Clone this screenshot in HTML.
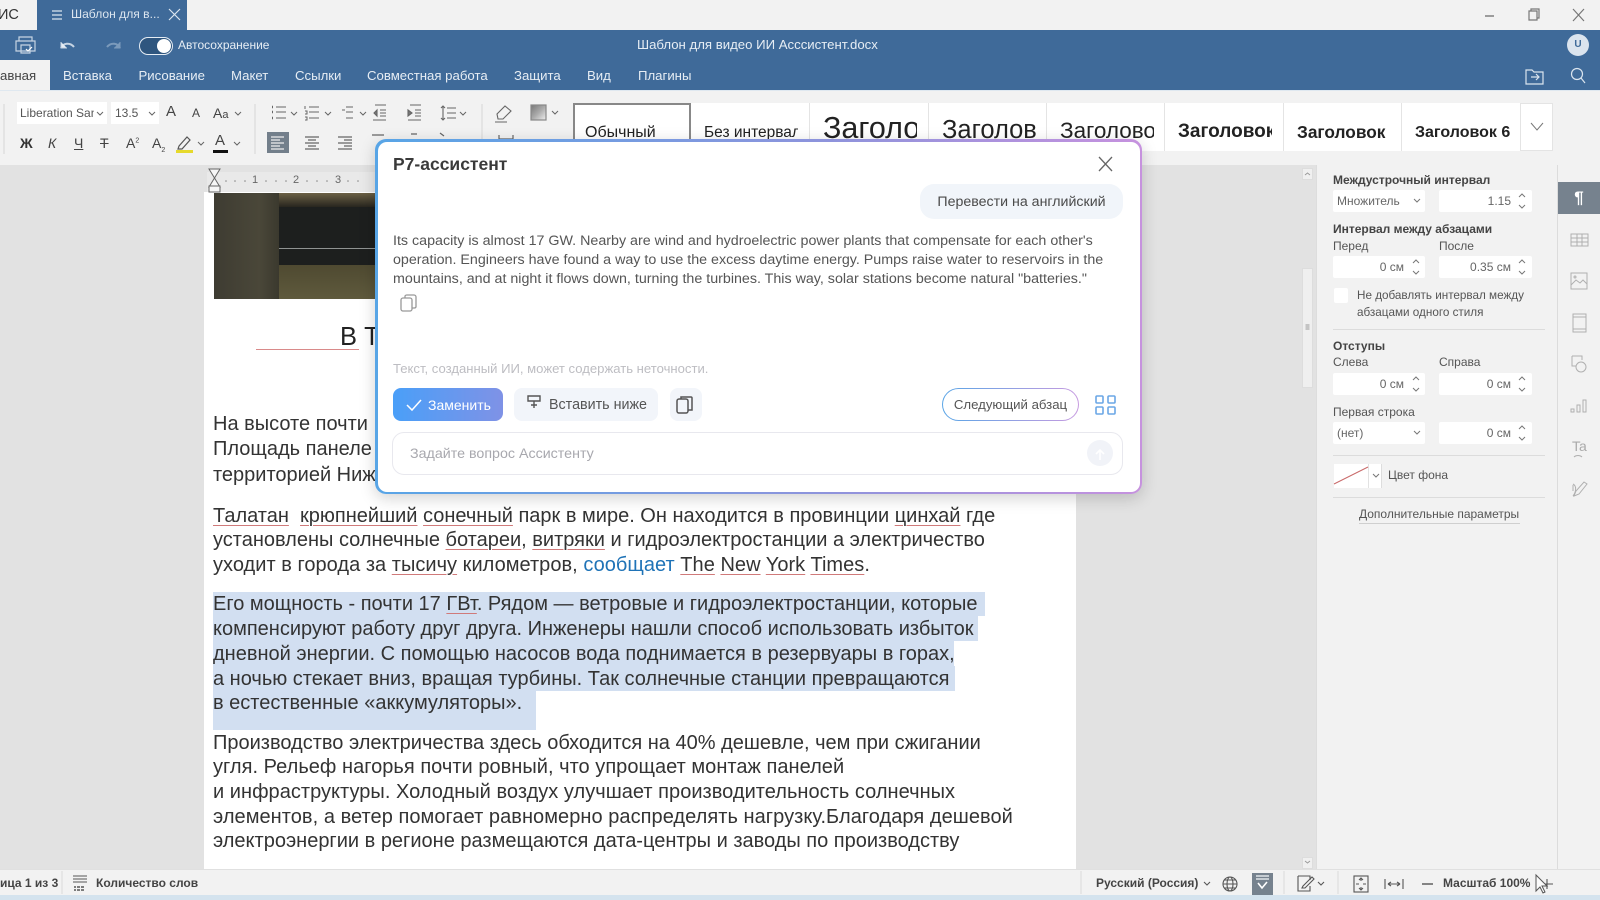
<!DOCTYPE html>
<html lang="ru"><head><meta charset="utf-8"><title>Р7</title>
<style>
*{box-sizing:border-box}
html,body{margin:0;padding:0;width:1600px;height:900px;overflow:hidden;background:#e2e2e2;font-family:"Liberation Sans",sans-serif;color:#444}
body{filter:blur(.3px)}
.a{position:absolute}
.t{position:absolute;white-space:nowrap;line-height:20px;height:20px}
.w{color:#e6edf4;font-size:13.2px}
.d{color:#333;font-size:20px;left:213px;line-height:24px;height:24px}
.u{text-decoration:underline;text-decoration-color:#d07a7a;text-decoration-thickness:1px;text-underline-offset:3px}
.l{font-size:12px;color:#555}
.b{font-size:12px;font-weight:bold;color:#444}
.f{position:absolute;background:#fff;border-radius:2px;height:22px;font-size:12px;color:#666;line-height:22px;padding-right:21px;text-align:right}
.f.c{padding:0 0 0 4px;text-align:left}
.hr{position:absolute;left:1333px;width:212px;height:1px;background:#dcdcdc}
.cell{position:absolute;top:103px;height:48px;background:#fff;overflow:hidden;border-right:1px solid #e4e4e4}
.cell span{position:absolute;white-space:nowrap;color:#222;line-height:40px;width:94px;overflow:hidden;left:13px}
.m{font-size:14.27px;color:#555;left:393px}
</style></head><body>

<!-- title bar -->
<div class="a" style="left:0;top:0;width:1600px;height:30px;background:#f2f2f2"></div>
<div class="t" style="left:-2px;top:5px;font-size:14.5px;color:#333">ИС</div>
<div class="a" style="left:37px;top:0;width:150px;height:30px;background:#3f6a99"></div>
<div class="t w" style="left:71px;top:4px;font-size:12.1px;color:#dbe5ef">Шаблон для в...</div>

<!-- header -->
<div class="a" style="left:0;top:30px;width:1600px;height:60px;background:#3f6a99"></div>
<div class="a" style="left:0;top:60px;width:50px;height:30px;background:#f2f2f2"></div>
<div class="t" style="left:0;top:66px;font-size:13.2px;color:#444">авная</div>
<div class="t w" style="left:63px;top:66px">Вставка</div>
<div class="t w" style="left:138.5px;top:66px">Рисование</div>
<div class="t w" style="left:231px;top:66px">Макет</div>
<div class="t w" style="left:295px;top:66px">Ссылки</div>
<div class="t w" style="left:367px;top:66px">Совместная работа</div>
<div class="t w" style="left:514px;top:66px">Защита</div>
<div class="t w" style="left:587px;top:66px">Вид</div>
<div class="t w" style="left:638px;top:66px">Плагины</div>
<div class="t w" style="left:178px;top:35px;font-size:12px">Автосохранение</div>
<div class="t w" style="left:637px;top:35px;font-size:13.2px">Шаблон для видео ИИ Асссистент.docx</div>
<div class="a" style="left:139px;top:37px;width:34px;height:18px;border:1.5px solid #e6edf4;border-radius:9px;background:#2f567f"></div>
<div class="a" style="left:157px;top:39px;width:14px;height:14px;border-radius:50%;background:#fff"></div>
<div class="a" style="left:1567px;top:34px;width:22px;height:22px;border-radius:50%;background:#dbe4ee;color:#3f6a99;font-size:10px;font-weight:bold;text-align:center;line-height:22px">U</div>

<!-- toolbar -->
<div class="a" style="left:0;top:90px;width:1600px;height:75px;background:#f2f2f2;border-top:1px solid #dfe8f0"></div>
<div class="a" style="left:17px;top:102px;width:90px;height:22px;background:#fff"></div>
<div class="a" style="left:111px;top:102px;width:48px;height:22px;background:#fff"></div>
<div class="t" style="left:20px;top:103px;font-size:12px;width:74px;overflow:hidden;color:#555">Liberation Sans</div>
<div class="t" style="left:115px;top:103px;font-size:12px;color:#555">13.5</div>
<div class="t" style="left:166px;top:102px;font-size:15px">A</div>
<div class="t" style="left:192px;top:103px;font-size:12px">A</div>
<div class="t" style="left:213px;top:103px;font-size:14px">A<span style="font-size:11px">a</span></div>
<div class="t" style="left:20px;top:133px;font-size:14px;font-weight:bold;color:#333">Ж</div>
<div class="t" style="left:48px;top:133px;font-size:14px;font-style:italic">К</div>
<div class="t" style="left:74px;top:133px;font-size:14px;text-decoration:underline">Ч</div>
<div class="t" style="left:100px;top:133px;font-size:14px;text-decoration:line-through">Т</div>
<div class="t" style="left:126px;top:133px;font-size:14px">A<sup style="font-size:7px;line-height:0">2</sup></div>
<div class="t" style="left:152px;top:133px;font-size:14px">A<sub style="font-size:7px;line-height:0">2</sub></div>
<div class="t" style="left:215px;top:131px;font-size:15px">A</div>
<div class="a" style="left:213px;top:150px;width:15px;height:3px;background:#111"></div>
<div class="a" style="left:176px;top:150px;width:17px;height:3px;background:#e6d92c"></div>
<div class="a" style="left:267px;top:132px;width:22px;height:21px;background:#737f8b"></div>

<svg class="a" style="left:0;top:0" width="1600" height="900" fill="none" stroke="#555" stroke-width="1.2">
 <!-- title bar icons -->
 <path d="M169 9l11 11M180 9l-11 11" stroke="#dbe5ef"/>
 <path d="M52 11h10M52 15h10M52 19h10" stroke="#dbe5ef"/>
 <path d="M1485 16h9" stroke="#777" stroke-width="1.4"/>
 <path d="M1529 11h8v9h-8zM1531 11V9h8v9h-2" stroke="#777"/>
 <path d="M1573 9l11 12M1584 9l-11 12" stroke="#777"/>
 <!-- header icons -->
 <g stroke="#c6d4e3" stroke-width="1.2">
  <path d="M19 41v-4h13v4M16 41h19v10h-19zM21 45h9v8h-9z"/>
  <path d="M26 49l2 2 4-4" stroke="#fff"/>
  <path d="M61 48c2-5 9-6 13-1" stroke-width="2"/><path d="M61 42v6h6" fill="#e6edf4" stroke-width="1"/>
 </g>
 <path d="M120 48c-2-5-9-6-13-1" stroke="#7b9abb" stroke-width="2"/><path d="M120 42v6h-6" stroke="#7b9abb" fill="#7b9abb" stroke-width="1"/>
 <g stroke="#dbe5ef">
  <path d="M1526 70h6l2 2h9v12h-17zM1531 77h8M1536 74l3 3-3 3"/>
  <circle cx="1577" cy="74" r="5.5"/><path d="M1581 78l4 5"/>
 </g>
 <!-- font combos & chevrons -->
 <g stroke="#666" stroke-width="1">
  <path d="M97 112l3 3 3-3M149 112l3 3 3-3M235 112l3 3 3-3M291 112l3 3 3-3M325 112l3 3 3-3M360 112l3 3 3-3M460 112l3 3 3-3M552 111l3 3 3-3M198 142l3 3 3-3M234 142l3 3 3-3"/>
 </g>
 <!-- separators -->
 <path d="M4 104v50M255 104v50M482 104v50" stroke="#dcdcdc"/>
 <!-- lists -->
 <g stroke="#666" stroke-width="1.1">
  <path d="M276 107h10M276 112h10M276 118h10M309 107h10M309 112h10M309 118h10M346 107h7M346 112h7M346 118h7M342 110h3" />
  <path d="M272 107h1M272 112h1M272 118h1" stroke-width="2.5"/>
  <path d="M305 106v3M305 111h2v3h-2M305 117h2v3h-2" stroke-width="1"/>
  <path d="M375 105h11M380 110h6M380 113h6M380 116h6M373 120h13M377 110l-3 3 3 3z" fill="#777"/>
  <path d="M410 105h11M415 110h6M415 113h6M415 116h6M408 120h13M408 110l4 3-4 3z" fill="#777"/>
  <path d="M447 108h9M447 113h9M447 118h9M443 106v14M441 108l2-2 2 2M441 118l2 2 2-2"/>
  <path d="M497 114l8-8 6 5-8 8h-5zM495 122h12"/>
 </g>
 <defs><linearGradient id="sh" x1="0" y1="0" x2="1" y2="1"><stop offset="0" stop-color="#777"/><stop offset=".5" stop-color="#aaa"/><stop offset="1" stop-color="#eee"/></linearGradient></defs>
 <rect x="531" y="105" width="15" height="15" fill="url(#sh)" stroke="#888"/>
 <!-- row 2 -->
 <path d="M179 146l8-9 3 3-8 9h-4z" stroke="#555"/>
 <path d="M271 137h13M271 140h9M271 143h13M271 146h9M271 149h13" stroke="#eee"/>
 <path d="M305 137h14M308 140h8M305 143h14M308 146h8M305 149h14M338 137h14M344 140h8M338 143h14M344 146h8M338 149h14" stroke="#666"/>
 <path d="M372 135h12M411 134h6M440 133l4 3M499 135v4h14v-4" stroke="#666"/>
</svg>

<!-- styles gallery -->
<div class="a" style="left:573px;top:103px;width:980px;height:48px;background:#fff;border:1px solid #e4e4e4"></div>
<div class="cell" style="left:573px;width:118px;border:2px solid #888;border-bottom:0;top:103px"><span style="left:10px;font-size:16px;top:8px;width:100px">Обычный</span></div>
<div class="cell" style="left:691px;width:119px"><span style="font-size:15.5px;top:10px">Без интервала</span></div>
<div class="cell" style="left:810px;width:119px"><span style="font-size:30.5px;top:5px">Заголовок</span></div>
<div class="cell" style="left:929px;width:118px"><span style="font-size:25.5px;top:7px">Заголовок</span></div>
<div class="cell" style="left:1047px;width:118px"><span style="font-size:22.5px;top:8px">Заголовок</span></div>
<div class="cell" style="left:1165px;width:119px"><span style="font-size:19px;top:9px;font-weight:bold">Заголовок</span></div>
<div class="cell" style="left:1284px;width:118px"><span style="font-size:17.3px;top:9px;font-weight:bold">Заголовок</span></div>
<div class="cell" style="left:1402px;width:119px"><span style="font-size:16px;top:10px;font-weight:bold;width:100px">Заголовок 6</span></div>
<svg class="a" style="left:1521px;top:103px" width="32" height="48" fill="none" stroke="#777"><path d="M10 20l6 7 6-7"/></svg>

<!-- canvas -->
<div class="a" style="left:0;top:165px;width:1316px;height:705px;background:#e2e2e2"></div>
<div class="a" style="left:204px;top:192px;width:872px;height:678px;background:#fff"></div>
<!-- ruler -->
<div class="a" style="left:207px;top:172px;width:175px;height:20px;background:#e9e9e9"></div>
<div class="t" style="left:252px;top:170px;font-size:11px;color:#666">1</div>
<div class="t" style="left:293px;top:170px;font-size:11px;color:#666">2</div>
<div class="t" style="left:335px;top:170px;font-size:11px;color:#666">3</div>
<svg class="a" style="left:214px;top:171px" width="170" height="20" fill="#888" stroke="none">
 <circle cx="12" cy="10" r=".8"/><circle cx="21" cy="10" r=".8"/><circle cx="31" cy="10" r=".8"/><circle cx="52" cy="10" r=".8"/><circle cx="62" cy="10" r=".8"/><circle cx="72" cy="10" r=".8"/><circle cx="93" cy="10" r=".8"/><circle cx="103" cy="10" r=".8"/><circle cx="113" cy="10" r=".8"/><circle cx="134" cy="10" r=".8"/><circle cx="144" cy="10" r=".8"/>
</svg>
<svg class="a" style="left:205px;top:168px" width="20" height="26" fill="#f6f6f6" stroke="#666" stroke-width="1">
 <path d="M4 1h11l-5.500 9 5.500 9h-11l5.500-9z"/><rect x="4" y="18" width="11" height="6"/>
</svg>

<!-- doc image -->
<div class="a" style="left:214px;top:193px;width:170px;height:106px;overflow:hidden;background:#1d1f1e">
 <div class="a" style="left:0;top:0;width:65px;height:106px;background:linear-gradient(90deg,#3e3c32,#4a4739 70%,#3b392e)"></div>
 <div class="a" style="left:65px;top:0;width:105px;height:14px;background:linear-gradient(#6b6045,#28261f)"></div>
 <div class="a" style="left:65px;top:72px;width:105px;height:34px;background:linear-gradient(#4f4a31,#5f5a3d)"></div>
 <div class="a" style="left:65px;top:55px;width:105px;height:1px;background:#8f9392"></div>
</div>
<div class="t" style="left:340px;top:323px;font-size:25.5px;color:#222;line-height:28px;height:28px">В Т</div>
<div class="a" style="left:256px;top:349px;width:103px;height:1px;background:#d98a8a"></div>

<!-- doc text -->
<div class="t d" style="top:412px">На высоте почти</div>
<div class="t d" style="top:437px">Площадь панеле</div>
<div class="t d" style="top:463px">территорией Ниж</div>

<div class="t d" style="top:503.500px"><span class="u">Талатан</span>&nbsp; <span class="u">крюпнейший</span> <span class="u">сонечный</span> парк в мире. Он находится в провинции <span class="u">цинхай</span> где</div>
<div class="t d" style="top:528px">установлены солнечные <span class="u">ботареи</span>, <span class="u">витряки</span> и гидроэлектростанции а электричество</div>
<div class="t d" style="top:552.500px;letter-spacing:.03px">уходит в города за <span class="u">тысичу</span> километров, <span style="color:#1f73b7">сообщает</span> <span class="u">The</span> <span class="u">New</span> <span class="u">York</span> <span class="u">Times</span>.</div>

<div class="a" style="left:213px;top:592px;width:772px;height:24px;background:#d2dff1"></div>
<div class="a" style="left:213px;top:616px;width:765px;height:25px;background:#d2dff1"></div>
<div class="a" style="left:213px;top:641px;width:741px;height:25px;background:#d2dff1"></div>
<div class="a" style="left:213px;top:666px;width:742px;height:25px;background:#d2dff1"></div>
<div class="a" style="left:213px;top:691px;width:323px;height:39px;background:#d2dff1"></div>
<div class="t d" style="top:592px">Его мощность - почти 17 <span class="u">ГВт</span>. Рядом — ветровые и гидроэлектростанции, которые</div>
<div class="t d" style="top:616.500px">компенсируют работу друг друга. Инженеры нашли способ использовать избыток</div>
<div class="t d" style="top:641.500px">дневной энергии. С помощью насосов вода поднимается в резервуары в горах,</div>
<div class="t d" style="top:666.500px">а ночью стекает вниз, вращая турбины. Так солнечные станции превращаются</div>
<div class="t d" style="top:691px">в естественные «аккумуляторы».</div>

<div class="t d" style="top:730.500px">Производство электричества здесь обходится на 40% дешевле, чем при сжигании</div>
<div class="t d" style="top:755px;letter-spacing:.03px">угля. Рельеф нагорья почти ровный, что упрощает монтаж панелей</div>
<div class="t d" style="top:780px;letter-spacing:.03px">и инфраструктуры. Холодный воздух улучшает производительность солнечных</div>
<div class="t d" style="top:804.500px;letter-spacing:.05px">элементов, а ветер помогает равномерно распределять нагрузку.Благодаря дешевой</div>
<div class="t d" style="top:829px">электроэнергии в регионе размещаются дата-центры и заводы по производству</div>

<!-- scrollbar -->
<div class="a" style="left:1302px;top:168px;width:11px;height:12px;background:#f0f0f0;border:1px solid #ddd"></div>
<div class="a" style="left:1302px;top:268px;width:11px;height:120px;background:#efefef;border:1px solid #ddd"></div>
<div class="a" style="left:1302px;top:857px;width:11px;height:12px;background:#f0f0f0;border:1px solid #ddd"></div>
<svg class="a" style="left:1302px;top:168px" width="11" height="701" fill="none" stroke="#999">
 <path d="M3 7l2.500-2 2.500 2M3 693l2.500 2 2.500-2M3.500 157h4M3.500 159h4M3.500 161h4" stroke-width=".9"/>
</svg>

<!-- right panel -->
<div class="a" style="left:1316px;top:165px;width:284px;height:705px;background:#f2f2f2;border-left:1px solid #ddd"></div>
<div class="a" style="left:1557px;top:165px;width:1px;height:705px;background:#dcdcdc"></div>
<div class="a" style="left:1558px;top:182px;width:42px;height:32px;background:#76828e;color:#fff;font-size:17px;font-weight:bold;text-align:center;line-height:32px">¶</div>

<div class="t b" style="left:1333px;top:170px">Междустрочный интервал</div>
<div class="f c" style="left:1333px;top:190px;width:92px">Множитель</div>
<div class="f" style="left:1439px;top:190px;width:93px">1.15</div>
<div class="t b" style="left:1333px;top:219px">Интервал между абзацами</div>
<div class="t l" style="left:1333px;top:236px">Перед</div>
<div class="t l" style="left:1439px;top:236px">После</div>
<div class="f" style="left:1333px;top:256px;width:92px">0 см</div>
<div class="f" style="left:1439px;top:256px;width:93px">0.35 см</div>
<div class="a" style="left:1334px;top:288px;width:14px;height:15px;background:#fff;border-radius:2px"></div>
<div class="t l" style="left:1357px;top:286px;font-size:11.7px">Не добавлять интервал между</div>
<div class="t l" style="left:1357px;top:303px;font-size:11.7px">абзацами одного стиля</div>
<div class="hr" style="top:329px"></div>
<div class="t b" style="left:1333px;top:336px">Отступы</div>
<div class="t l" style="left:1333px;top:352px">Слева</div>
<div class="t l" style="left:1439px;top:352px">Справа</div>
<div class="f" style="left:1333px;top:373px;width:92px">0 см</div>
<div class="f" style="left:1439px;top:373px;width:93px">0 см</div>
<div class="t l" style="left:1333px;top:402px">Первая строка</div>
<div class="f c" style="left:1333px;top:422px;width:92px">(нет)</div>
<div class="f" style="left:1439px;top:422px;width:93px">0 см</div>
<div class="hr" style="top:455px"></div>
<div class="a" style="left:1334px;top:464px;width:48px;height:24px;background:#fff;border-right:1px solid #ddd"></div>
<div class="a" style="left:1368px;top:464px;width:1px;height:24px;background:#e2e2e2"></div>
<div class="t l" style="left:1388px;top:465px">Цвет фона</div>
<div class="hr" style="top:497px"></div>
<div class="t l" style="left:1359px;top:504px">Дополнительные параметры</div>
<div class="a" style="left:1359px;top:523px;width:161px;height:1px;background:#cfcfcf"></div>

<svg class="a" style="left:1316px;top:165px" width="284" height="340" fill="none" stroke="#666" stroke-width="1">
 <g stroke="#777">
  <path d="M98 34l3 3 3-3M98 266l3 3 3-3M57 309l3 3 3-3"/>
  <path d="M203 32l3-3 3 3M203 40l3 3 3-3M97 98l3-3 3 3M97 106l3 3 3-3M203 98l3-3 3 3M203 106l3 3 3-3M97 215l3-3 3 3M97 223l3 3 3-3M203 215l3-3 3 3M203 223l3 3 3-3M203 264l3-3 3 3M203 272l3 3 3-3"/>
 </g>
 <path d="M18 319l34-17" stroke="#c96a6a"/>
 <g stroke="#b0b0b0" transform="translate(8,0)">
  <rect x="247" y="69" width="17" height="12"/><path d="M247 73h17M247 77h17M253 69v12M258 69v12"/>
  <rect x="247" y="108" width="16" height="16"/><path d="M247 120l5-5 4 3 3-3 4 4"/><circle cx="251" cy="112" r="1"/>
  <rect x="249" y="149" width="13" height="18"/><path d="M249 152h13M249 164h13"/>
  <path d="M248 191h10v4M248 191v10h4"/><circle cx="257" cy="202" r="5"/>
  <path d="M247 247h3v-3h-3zM253 247h3v-7h-3zM259 247h3v-12h-3z"/>
  <path d="M250 292c2-2 6-2 8 0"/>
  <path d="M249 319c4 2 3 8 0 12M250 331l5-2 8-10-3-2-8 9zM249 320v6"/>
 </g>
 <text x="256" y="286" font-family="Liberation Sans" font-size="14" fill="#aaa" stroke="none">Ta</text>
</svg>

<!-- status bar -->
<div class="a" style="left:0;top:869px;width:1600px;height:26px;background:#f2f2f2;border-top:1px solid #e0e0e0"></div>
<div class="a" style="left:0;top:895px;width:1600px;height:5px;background:#d4e3ee"></div>
<div class="t" style="left:0;top:873px;font-size:12px;font-weight:bold;color:#444">ица 1 из 3</div>
<div class="t" style="left:96px;top:873px;font-size:12px;font-weight:bold;color:#444">Количество слов</div>
<div class="t" style="left:1096px;top:873px;font-size:12px;font-weight:bold;color:#444">Русский (Россия)</div>
<div class="t" style="left:1443px;top:873px;font-size:12px;font-weight:bold;color:#444">Масштаб 100%</div>
<div class="a" style="left:1252px;top:873px;width:21px;height:22px;background:#76828e"></div>
<svg class="a" style="left:0;top:869px" width="1600" height="26" fill="none" stroke="#555" stroke-width="1.1">
 <path d="M62 2v23M1081 2v23M1284 2v23M1338 2v23" stroke="#ddd"/>
 <path d="M73 7h14M73 10h14M73 13h14" stroke-width="1"/>
 <path d="M74 18h2M77 18h3M81 18h3M74 21h2M77 21h3M81 21h3" stroke-width="1.6"/>
 <path d="M1204 13l3 3 3-3M1318 13l3 3 3-3"/>
 <circle cx="1230" cy="15" r="7"/><ellipse cx="1230" cy="15" rx="3" ry="7"/><path d="M1223 15h14M1224 11h12M1224 19h12"/>
 <path d="M1256 7h13M1256 10h13" stroke="#dfe4e9" stroke-width="1.6"/><path d="M1258 14l4 5 5-6" stroke="#fff" stroke-width="1.6"/>
 <path d="M1298 7h12v4M1298 7v15h12v-5M1303 17l9-9 2 2-9 9h-3z"/>
 <rect x="1354" y="7" width="14" height="16"/><path d="M1361 9v3M1359 11l2-2 2 2M1361 21v-3M1359 19l2 2 2-2M1356 15h3M1363 15h3"/>
 <path d="M1385 10v10M1403 10v10M1388 15h12M1388 15l3-2M1388 15l3 2M1400 15l-3-2M1400 15l-3 2"/>
 <path d="M1422 15h11" stroke-width="1.4"/>
 <path d="M1542 15h11M1547 10v10"/>
 <path d="M1536 6v16l4-4 3 6 2-1-3-6h5z" fill="#fbfbfb" stroke="#555" stroke-width="1"/>
</svg>

<!-- modal -->
<div class="a" style="left:375px;top:139px;width:767px;height:355px;border-radius:11px;padding:2.500px;background:linear-gradient(90deg,#58a5e6,#8f93dc 60%,#c692de);box-shadow:0 4px 16px rgba(0,0,0,.18)">
 <div style="width:100%;height:100%;background:#fff;border-radius:9px"></div>
</div>
<div class="t" style="left:393px;top:154px;font-size:17.5px;font-weight:bold;color:#3a3a3a">Р7-ассистент</div>
<div class="a" style="left:920px;top:184px;width:203px;height:35px;background:#f1f5fa;border-radius:14px;text-align:center;font-size:14.2px;line-height:37px;color:#4a4a4a">Перевести на английский</div>
<div class="t m" style="top:230.500px">Its capacity is almost 17 GW. Nearby are wind and hydroelectric power plants that compensate for each other's</div>
<div class="t m" style="top:249.500px">operation. Engineers have found a way to use the excess daytime energy. Pumps raise water to reservoirs in the</div>
<div class="t m" style="top:268.500px">mountains, and at night it flows down, turning the turbines. This way, solar stations become natural "batteries."</div>
<div class="t" style="left:393px;top:359px;font-size:13.1px;color:#bdbdc2">Текст, созданный ИИ, может содержать неточности.</div>
<div class="a" style="left:393px;top:388px;width:110px;height:33px;border-radius:8px;background:linear-gradient(90deg,#4a9ff8,#7f92e6);color:#fff;font-size:14px;line-height:35px;padding-left:35px">Заменить</div>
<div class="a" style="left:514px;top:388px;width:144px;height:33px;border-radius:8px;background:#f2f5fa;color:#555;font-size:14.3px;line-height:35px;padding-left:35px">Вставить ниже</div>
<div class="a" style="left:670px;top:388px;width:32px;height:33px;border-radius:8px;background:#f2f5fa"></div>
<div class="a" style="left:942px;top:388px;width:137px;height:33px;border-radius:17px;padding:1.200px;background:linear-gradient(90deg,#5aa5e6,#c79be0)"><div style="width:100%;height:100%;background:#fff;border-radius:16px;text-align:center;font-size:13.2px;line-height:31px;color:#555">Следующий абзац</div></div>
<div class="a" style="left:392px;top:432px;width:731px;height:43px;border:1px solid #e8e8ee;border-radius:12px;background:#fff"></div>
<div class="t" style="left:410px;top:444px;font-size:14.25px;color:#a8a8ae">Задайте вопрос Ассистенту</div>
<div class="a" style="left:1087px;top:440px;width:26px;height:26px;border-radius:50%;background:#f1f3f8"></div>
<svg class="a" style="left:0;top:130px" width="1200" height="360" fill="none" stroke="#555" stroke-width="1.3">
 <path d="M1099 27l13 14M1112 27l-13 14" stroke="#666"/>
 <rect x="401" y="168" width="11" height="13" rx="2" stroke="#999"/><path d="M405 168v-2a2 2 0 0 1 2-1h7a2 2 0 0 1 2 2v10a2 2 0 0 1-2 1h-2" stroke="#999"/>
 <path d="M407 275l5 5 9-10" stroke="#fff" stroke-width="1.5"/>
 <path d="M528 266h12v5h-12zM534 271v7M531 275h6" stroke-width="1.4"/>
 <rect x="677" y="269" width="11" height="14" rx="2" stroke-width="1.5"/><path d="M681 269v-2h10a1 1 0 0 1 1 1v12h-4" stroke-width="1.5"/>
 <g stroke="#6ba7e6" stroke-width="1.6"><rect x="1096" y="266" width="7" height="7" rx="1"/><rect x="1108" y="266" width="7" height="7" rx="1"/><rect x="1096" y="277" width="7" height="7" rx="1"/><rect x="1108" y="277" width="7" height="7" rx="1"/></g>
 <path d="M1100 330v-10M1096 324l4-4 4 4" stroke="#fff" stroke-width="1.6"/>
</svg>
</body></html>
